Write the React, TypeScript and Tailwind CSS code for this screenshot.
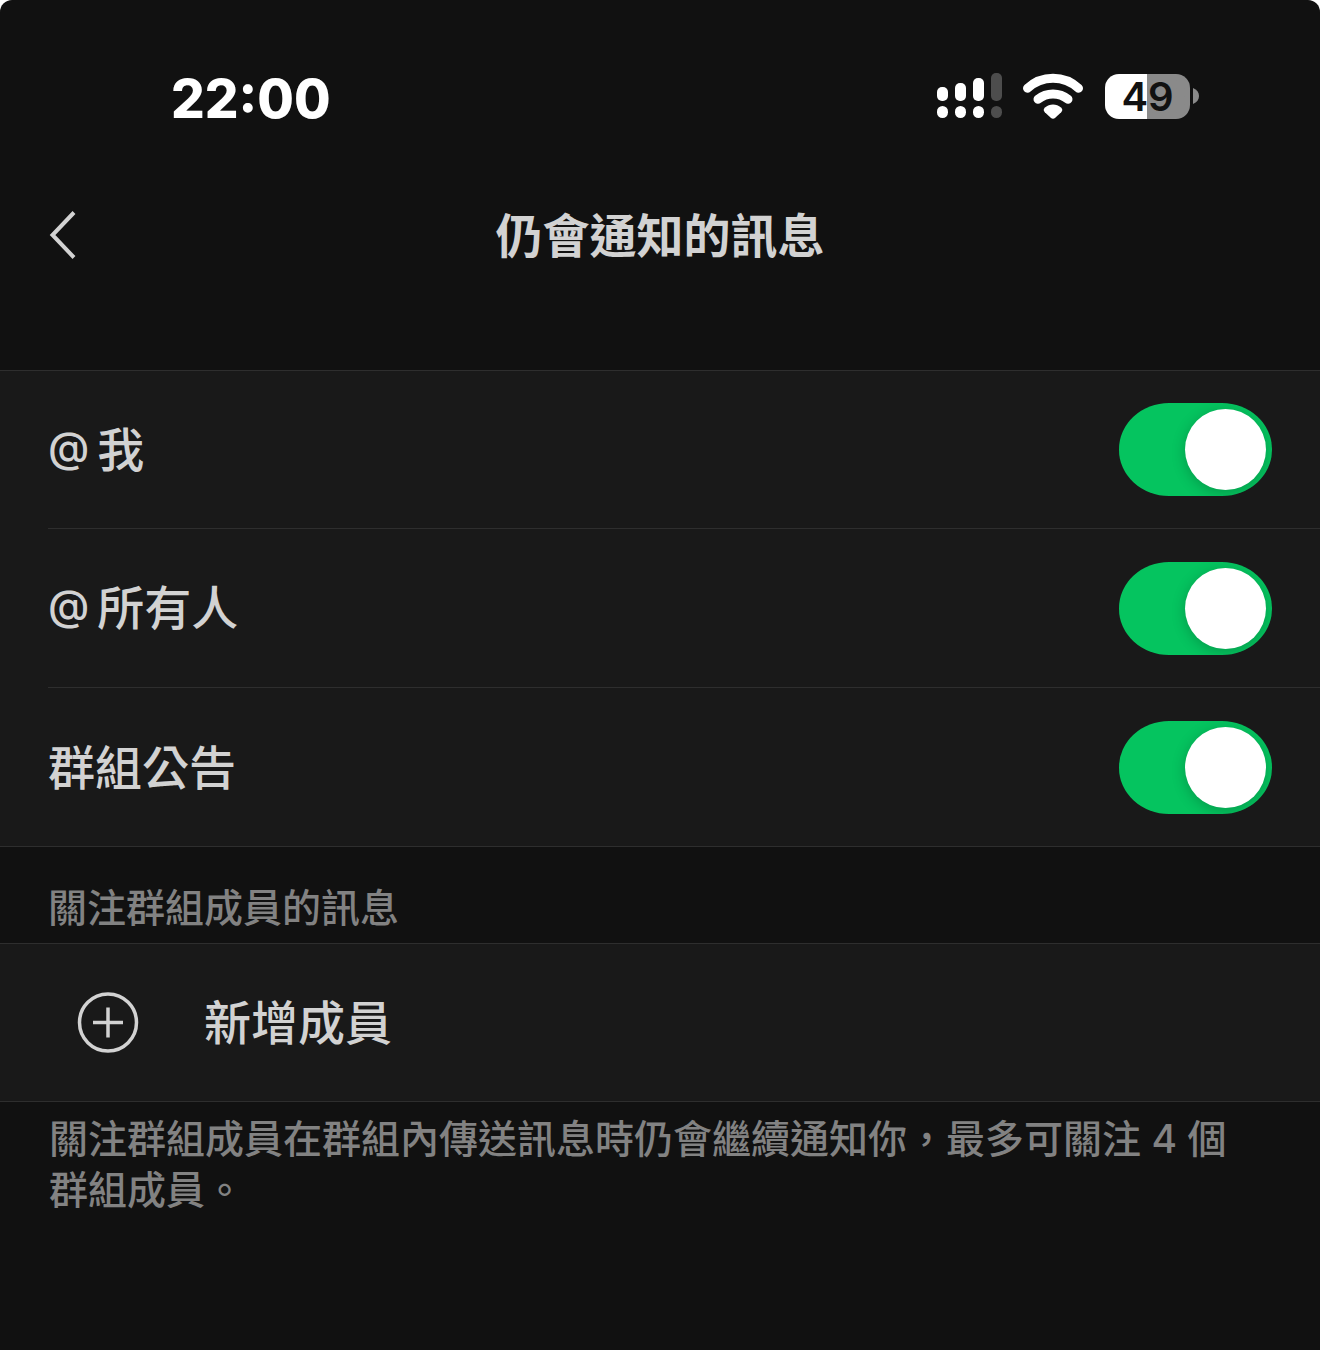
import { useState } from "react";
import type { ReactNode } from "react";

const bars = [
  { x: 0, top: 14, on: true },
  { x: 18, top: 10, on: true },
  { x: 36, top: 5, on: true },
  { x: 54, top: 0, on: false },
];

function SignalIcon() {
  return (
    <svg width="65" height="46" viewBox="0 0 65 46" role="img" aria-label="訊號">
      {bars.map((b) => (
        <g key={b.x} fill={b.on ? "#ffffff" : "#4d4d4d"}>
          <rect x={b.x} y={b.top} width="11" height={28 - b.top} rx="5" />
          <rect x={b.x} y="33" width="11" height="12" rx="5.5" />
        </g>
      ))}
    </svg>
  );
}

function WifiIcon() {
  return (
    <svg width="61" height="46" viewBox="0 0 61 46" role="img" aria-label="Wi-Fi">
      <g fill="none" stroke="#ffffff" strokeWidth="9" strokeLinecap="round">
        <path d="M4.5 15.2A37.5 37.5 0 0 1 55.5 15.2" />
        <path d="M15 26.2A24 24 0 0 1 45 26.2" />
      </g>
      <path
        d="M22 34.6C26.5 30.6 33.5 30.6 38 34.6C39.8 36.4 39.6 37.8 38.2 39.2L32 44.9C30.8 46 29.2 46 28 44.9L21.8 39.2C20.4 37.8 20.2 36.4 22 34.6Z"
        fill="#ffffff"
      />
    </svg>
  );
}

function Battery() {
  return (
    <div className="flex items-center gap-[3px]">
      <div className="flex h-[45px] w-[85px] items-center justify-center rounded-[14px] bg-linear-to-r from-white from-50% to-[#8a8a8a] to-50% pt-[2px] text-[40px] leading-none font-semibold text-[#111111]">
        49
      </div>
      <svg width="6" height="16" viewBox="0 0 6 16" aria-hidden="true">
        <path d="M0 0C4 1.5 6 4.5 6 8S4 14.5 0 16Z" fill="#8a8a8a" />
      </svg>
    </div>
  );
}

function At() {
  return <span className="mr-2 text-[42px] [font-feature-settings:'case']">@</span>;
}

function ToggleRow({ id, children }: { id: string; children: ReactNode }) {
  const [on, setOn] = useState(true);
  return (
    <li className="ml-12 flex h-[159px] items-center justify-between border-b border-[#2e2e2e] pr-12 first:h-[158px] last:h-[158px] last:border-b-0">
      <label htmlFor={id} className="pt-[2px] text-[47px] leading-[64px] font-medium">
        {children}
      </label>
      <input
        id={id}
        type="checkbox"
        role="switch"
        checked={on}
        onChange={(e) => setOn(e.target.checked)}
        className="flex h-[93px] w-[153px] shrink-0 cursor-pointer appearance-none items-center justify-start overflow-hidden rounded-[50px/46px] bg-[#3a3a3a] px-[6px] before:size-[81px] before:rounded-full before:bg-white before:shadow-[0_3px_14px_rgba(0,0,0,0.22)] before:content-[''] checked:justify-end checked:bg-[#05c45f]"
      />
    </li>
  );
}

export default function App() {
  return (
    <div className="bg-white">
      <main
        lang="zh-Hant"
        className="flex min-h-screen flex-col rounded-t-xl bg-[#111111] font-['Inter','Noto_Sans_CJK_TC',sans-serif] text-[#d2d2d2]"
      >
        <div className="flex h-[146px] items-start justify-between pt-[73px] pr-[121px] pl-[171px] text-white">
          <time className="text-[53px] leading-[52px] font-extrabold">22:00</time>
          <div className="flex items-center gap-[21px]">
            <SignalIcon />
            <WifiIcon />
            <Battery />
          </div>
        </div>

        <header className="grid h-[224px] grid-cols-[1fr_auto_1fr] items-start px-12 pt-14">
          <button type="button" aria-label="返回" className="flex h-[66px] w-8 items-center">
            <svg width="30" height="50" viewBox="0 0 30 50" fill="none" stroke="#d2d2d2" strokeWidth="4">
              <path d="M26 2.5L4.5 25L26 47.5" />
            </svg>
          </button>
          <h1 className="pt-px text-[47px] leading-[66px] font-bold">仍會通知的訊息</h1>
        </header>

        <ul className="border-y border-[#2e2e2e] bg-[#191919]">
          <ToggleRow id="mention-me">
            <At />我
          </ToggleRow>
          <ToggleRow id="mention-all">
            <At />
            所有人
          </ToggleRow>
          <ToggleRow id="announcement">群組公告</ToggleRow>
        </ul>

        <h2 className="px-12 pt-[34px] pb-2 text-[39px] leading-[54px] font-medium text-[#828282]">
          關注群組成員的訊息
        </h2>

        <button
          type="button"
          className="flex h-[159px] items-center gap-[65px] border-y border-[#2e2e2e] bg-[#191919] pl-[77px] text-left text-[47px] leading-[64px] font-medium"
        >
          <svg width="62" height="62" viewBox="0 0 62 62" fill="none" stroke="#d2d2d2" aria-hidden="true">
            <circle cx="31" cy="30.5" r="28.5" strokeWidth="3.5" />
            <path d="M31 15.5V45.5M16 30.5H46" strokeWidth="3.5" />
          </svg>
          新增成員
        </button>

        <p className="pt-[11px] pr-16 pl-[49px] text-[39px] leading-[51px] font-medium text-[#828282]">
          關注群組成員在群組內傳送訊息時仍會繼續通知你，最多可關注 4 個群組成員。
        </p>
      </main>
    </div>
  );
}
